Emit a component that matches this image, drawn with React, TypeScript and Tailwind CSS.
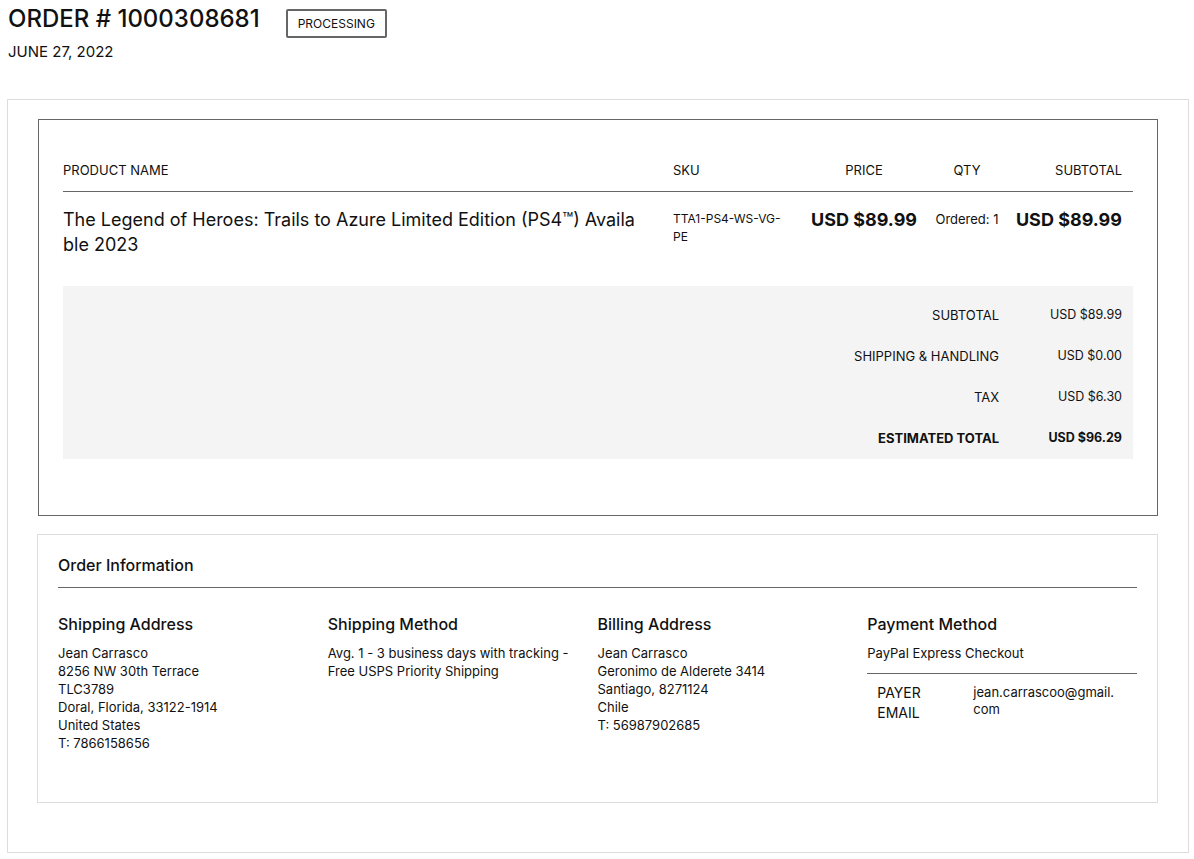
import { ReactNode } from 'react';

const font = "font-['Inter','Noto_Sans',sans-serif]";

function TotalRow({ label, value, bold }: { label: string; value: string; bold?: boolean }) {
  return (
    <div className="flex h-[41px] items-center justify-end">
      <span className={`pr-px text-right text-[13px] ${bold ? 'font-bold' : ''}`}>{label}</span>
      <span className={`w-[133px] pr-[11px] text-right text-[12.5px] ${bold ? 'font-bold' : ''}`}>{value}</span>
    </div>
  );
}

function InfoColumn({ title, children, last }: { title: string; children: ReactNode; last?: boolean }) {
  return (
    <div className={last ? '' : 'pr-5'}>
      <h3 className="mb-2 text-[16px] font-medium leading-6">{title}</h3>
      {children}
    </div>
  );
}

export default function App() {
  return (
    <div className={`${font} min-h-[859px] bg-white text-[#111]`}>
      {/* Header */}
      <div className="flex items-start px-2 pt-[4px]">
        <h1 className="text-[24px] font-medium leading-[30px]">ORDER # 1000308681</h1>
        <span className="ml-[26px] mt-[5px] rounded-[2px] border-2 border-[#666] px-[10px] py-[5px] text-[12px] leading-[15px]">
          PROCESSING
        </span>
      </div>
      <p className="px-2 pt-[4px] text-[15px] leading-5">JUNE 27, 2022</p>

      {/* Main container */}
      <div className="ml-[7px] mt-[37px] w-[1182px] border border-[#ddd] px-[30px] pt-[19px] pb-[49px]">
        {/* Items box */}
        <div className="border border-[#666] px-6 pt-[31px] pb-[56px]">
          <div className="flex h-[41px] items-center border-b border-[#666] text-[13px]">
            <div className="w-[610px]">PRODUCT NAME</div>
            <div className="w-[130px]">SKU</div>
            <div className="w-[122px] text-center">PRICE</div>
            <div className="w-[84px] text-center">QTY</div>
            <div className="w-[123px] pr-[10px] text-right">SUBTOTAL</div>
          </div>
          <div className="flex items-start pt-[15px] pb-[29px]">
            <div className="w-[610px] pr-5 text-[18px] leading-[25px]">
              The Legend of Heroes: Trails to Azure Limited Edition (PS4™) Availa
              <wbr />
              ble 2023
            </div>
            <div className="w-[130px] pr-[10px] pt-[3px] text-[12px] leading-[18px]">TTA1-PS4-WS-VG-PE</div>
            <div className="w-[122px] text-center text-[18px] font-bold leading-[25px]">USD $89.99</div>
            <div className="w-[84px] pt-[3px] text-center text-[13px] leading-[18px]">Ordered: 1</div>
            <div className="w-[123px] pr-[10px] text-right text-[18px] font-bold leading-[25px]">USD $89.99</div>
          </div>
          <div className="bg-[#f4f4f4] pt-[9px]">
            <TotalRow label="SUBTOTAL" value="USD $89.99" />
            <TotalRow label="SHIPPING & HANDLING" value="USD $0.00" />
            <TotalRow label="TAX" value="USD $6.30" />
            <TotalRow label="ESTIMATED TOTAL" value="USD $96.29" bold />
          </div>
        </div>

        {/* Order information */}
        <div className="-ml-px mt-[18px] border border-[#ddd] px-5 pt-[18px] pb-[50px]">
          <h2 className="border-b border-[#666] pb-[10px] text-[16px] font-medium leading-6">Order Information</h2>
          <div className="grid grid-cols-4 pt-6 text-[13px] leading-[18px]">
            <InfoColumn title="Shipping Address">
              <p>Jean Carrasco</p>
              <p>8256 NW 30th Terrace</p>
              <p>TLC3789</p>
              <p>Doral, Florida, 33122-1914</p>
              <p>United States</p>
              <p>T: 7866158656</p>
            </InfoColumn>
            <InfoColumn title="Shipping Method">
              <p>Avg. 1 - 3 business days with tracking - Free USPS Priority Shipping</p>
            </InfoColumn>
            <InfoColumn title="Billing Address">
              <p>Jean Carrasco</p>
              <p>Geronimo de Alderete 3414</p>
              <p>Santiago, 8271124</p>
              <p>Chile</p>
              <p>T: 56987902685</p>
            </InfoColumn>
            <InfoColumn title="Payment Method" last>
              <p className="border-b border-[#666] pb-[11px]">PayPal Express Checkout</p>
              <div className="flex pl-[10px] pt-[9px]">
                <div className="w-[96px] text-[14px] leading-5">
                  PAYER
                  <br />
                  EMAIL
                </div>
                <div className="flex-1 pt-[1px] text-[13px] leading-[17px]">
                  jean.carrascoo@gmail.
                  <wbr />
                  com
                </div>
              </div>
            </InfoColumn>
          </div>
        </div>
      </div>
    </div>
  );
}
